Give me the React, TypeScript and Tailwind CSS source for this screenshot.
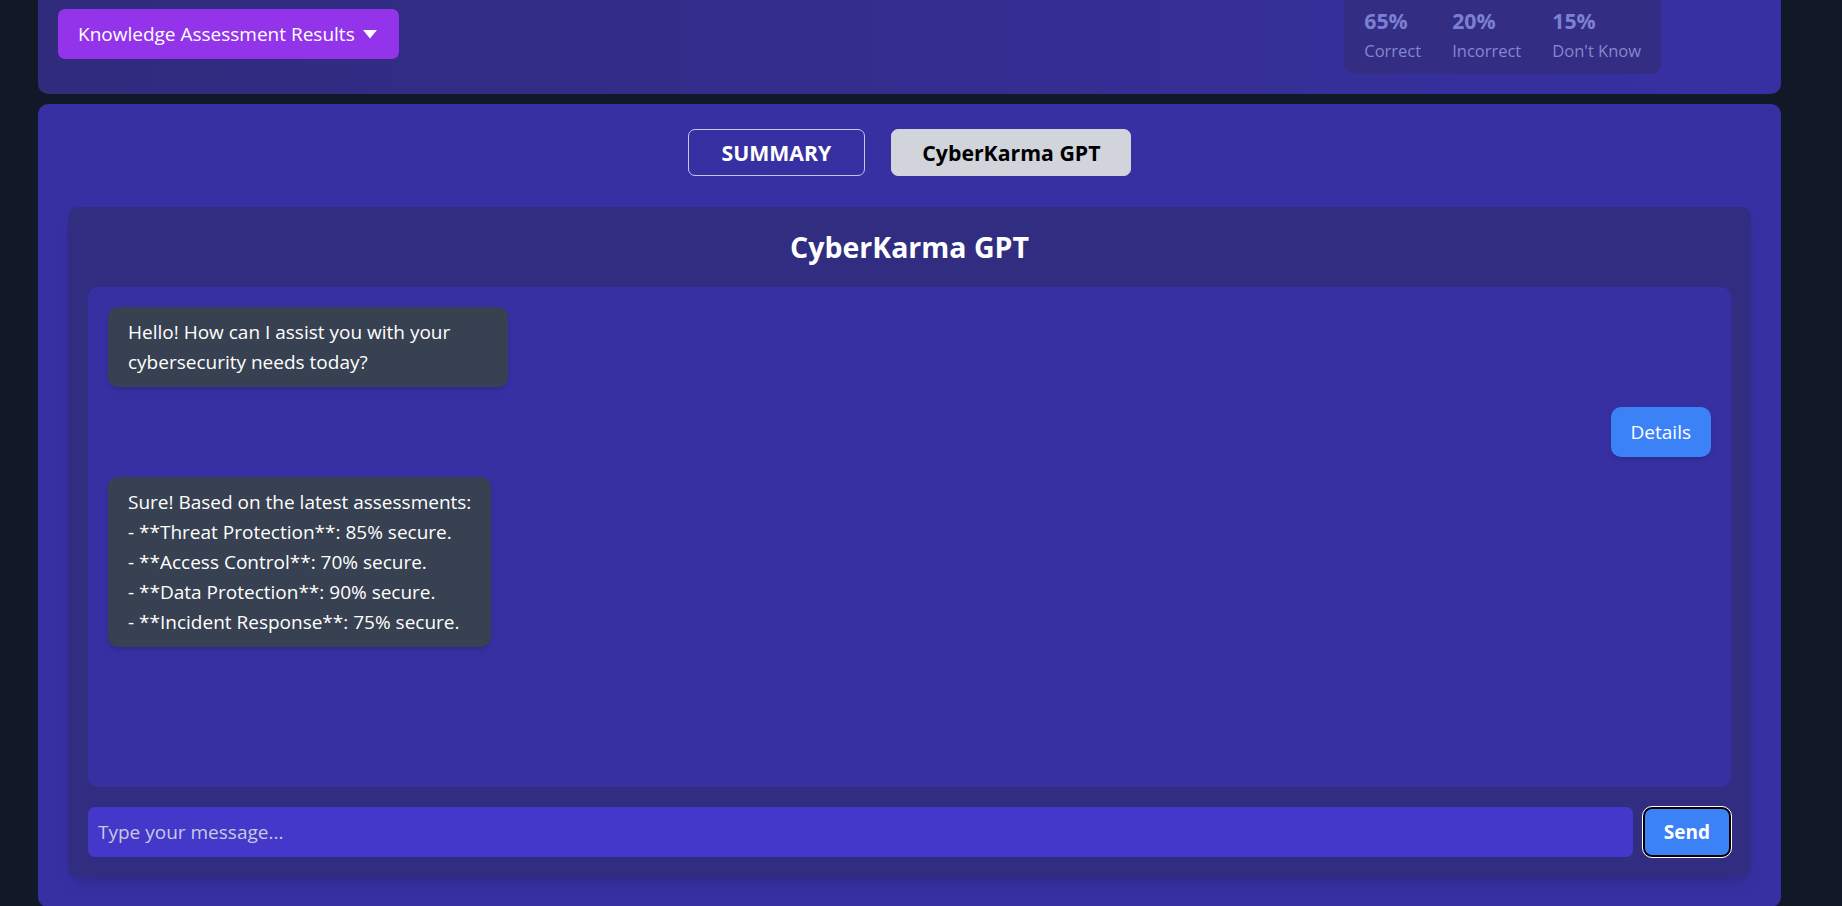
import { useState } from "react"

const stats = [
  { value: "65%", label: "Correct" },
  { value: "20%", label: "Incorrect" },
  { value: "15%", label: "Don't Know" },
]

const initialMessages = [
  { from: "bot", text: "Hello! How can I assist you with your cybersecurity needs today?" },
  { from: "user", text: "Details" },
  {
    from: "bot",
    text:
      "Sure! Based on the latest assessments:\n- **Threat Protection**: 85% secure.\n- **Access Control**: 70% secure.\n- **Data Protection**: 90% secure.\n- **Incident Response**: 75% secure.",
  },
]

function ResultsHeader() {
  return (
    <div className="flex h-[94px] justify-between rounded-b-[10px] bg-gradient-to-r from-[#302b7c] to-[#3730a3] px-5">
      <button className="mt-[9px] flex h-[50px] items-center self-start rounded-[7px] bg-[#9333ea] pl-5 pr-[22px] text-[19px] leading-[30px] text-white">
        Knowledge Assessment Results
        <svg className="ml-2" width="14" height="9" viewBox="0 0 14 9">
          <polygon points="0,0 14,0 7,8.5" fill="white" />
        </svg>
      </button>
      <div className="mb-5 mr-[100px] flex gap-[31px] self-end rounded-[10px] bg-[#332d84] px-5 pb-[11px] pt-5">
        {stats.map((s) => (
          <div key={s.label} className="flex flex-col">
            <span className="text-[21.25px] font-bold leading-[35px] text-[#7b80d4]">{s.value}</span>
            <span className="text-[16.5px] leading-[25px] text-[#8388cf]">{s.label}</span>
          </div>
        ))}
      </div>
    </div>
  )
}

export default function App() {
  const [tab, setTab] = useState("gpt")
  const [messages] = useState(initialMessages)
  const [draft, setDraft] = useState("")

  return (
    <div className="h-[906px] overflow-hidden bg-[#111827] pl-[38px] pr-[61px] font-['Open_Sans',sans-serif]">
      <ResultsHeader />

      <div className="mt-[10px] rounded-[10px] bg-[#3730a3] px-[30px] pb-[30px] pt-[25px]">
        <div className="flex justify-center gap-[26px]">
          <button
            onClick={() => setTab("summary")}
            className="rounded-[7px] border border-[#c9c6ec] px-[33px] py-[5px] text-[21.25px] font-bold leading-[35px] text-white"
          >
            SUMMARY
          </button>
          <button
            onClick={() => setTab("gpt")}
            className="rounded-[7px] border border-[#d1d5db] bg-[#d1d5db] px-[30px] py-[5px] text-[21.25px] font-bold leading-[35px] text-black"
          >
            CyberKarma GPT
          </button>
        </div>

        <div className="mt-[31px] rounded-[10px] bg-[#312e81] p-5 shadow-lg">
          <h2 className="mb-5 text-center text-[28.5px] font-bold leading-[40px] text-white">
            CyberKarma GPT
          </h2>

          <div className="flex h-[500px] flex-col gap-5 overflow-y-auto rounded-[10px] bg-[#3730a3] p-5">
            {messages.map((m, i) =>
              m.from === "bot" ? (
                <div
                  key={i}
                  className="w-fit max-w-[400px] whitespace-pre-line rounded-[10px] bg-[#374151] px-5 py-[10px] text-[19px] leading-[30px] text-white shadow-md"
                >
                  {m.text}
                </div>
              ) : (
                <div
                  key={i}
                  className="w-fit self-end rounded-[10px] bg-[#3b82f6] px-5 py-[10px] text-[19px] leading-[30px] text-white shadow-md"
                >
                  {m.text}
                </div>
              )
            )}
          </div>

          <div className="mt-5 flex gap-[10px]">
            <input
              value={draft}
              onChange={(e) => setDraft(e.target.value)}
              placeholder="Type your message..."
              className="h-[50px] flex-1 rounded-[7px] bg-[#4338ca] px-[10px] text-[19px] text-white outline-none placeholder:text-[#c9c8e4]"
            />
            <button className="h-[50px] rounded-[9px] border-2 border-black bg-[#3b82f6] px-[19px] text-[19px] font-bold text-white outline outline-[1.5px] outline-white">
              Send
            </button>
          </div>
        </div>
      </div>
    </div>
  )
}
